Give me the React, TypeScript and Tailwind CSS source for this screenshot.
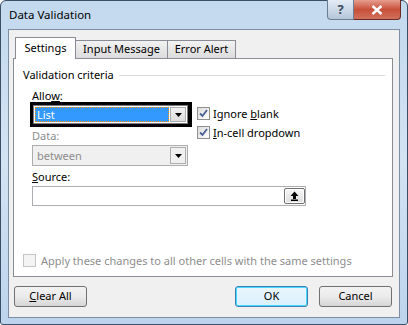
import React from "react";

const font = { fontFamily: '"Noto Sans", "Open Sans", sans-serif' };

function Check({ checked, disabled }: { checked?: boolean; disabled?: boolean }) {
  return (
    <div
      className={`w-[13px] h-[13px] border flex items-center justify-center shrink-0 ${
        disabled ? "border-[#c5c5c5] bg-[#f4f4f4]" : "border-[#8f8f8f] bg-gradient-to-br from-[#dcdcdc] to-[#ffffff]"
      }`}
    >
      {checked && (
        <svg width="9" height="9" viewBox="0 0 9 9">
          <path d="M1 4.5 L3.5 7 L8 1" fill="none" stroke="#4a5f97" strokeWidth="1.8" />
        </svg>
      )}
    </div>
  );
}

function DropBtn({ disabled }: { disabled?: boolean }) {
  return (
    <div
      className={`w-[16px] h-full border flex items-center justify-center ${
        disabled ? "border-[#adadad] bg-[#f0f0f0]" : "border-[#acacac] bg-gradient-to-b from-[#f2f2f2] to-[#dcdcdc]"
      }`}
    >
      <svg width="7" height="4" viewBox="0 0 7 4">
        <path d="M0 0 H7 L3.5 4 Z" fill="#000" />
      </svg>
    </div>
  );
}

function Btn({ children, def }: { children: React.ReactNode; def?: boolean }) {
  return (
    <div
      className={`w-[73px] h-[21px] rounded-[3px] border flex items-center justify-center text-[11px] text-black ${
        def
          ? "border-[#3c7fb1] bg-gradient-to-b from-[#eaf6fd] to-[#d9f0fc] shadow-[inset_0_0_0_1px_#48d9ff]"
          : "border-[#707070] bg-gradient-to-b from-[#f2f2f2] via-[#ebebeb] to-[#d6d6d6]"
      }`}
    >
      {children}
    </div>
  );
}

export default function App() {
  return (
    <div className="w-[408px] h-[325px] bg-white" style={font}>
      <div className="w-[408px] h-[325px] rounded-t-[6px] rounded-b-[3px] border border-[#3a4e66] bg-gradient-to-b from-[#c3d9ee] via-[#d3e3f4] to-[#bcd4ec] flex flex-col relative">
        {/* title bar */}
        <div className="h-[28px] flex items-center pl-[8px] text-[11.5px] text-black shrink-0">
          Data Validation
        </div>
        <div className="absolute top-[-1px] right-[6px] flex">
          <div className="w-[27px] h-[20px] rounded-bl-[4px] border border-[#6b7d94] border-t-0 bg-gradient-to-b from-[#e4ecf5] to-[#b5c6da] flex items-center justify-center text-[13px] font-bold text-[#3a4a60]">
            ?
          </div>
          <div className="w-[47px] h-[20px] rounded-br-[4px] border border-[#6a2a24] border-t-0 border-l-0 bg-gradient-to-b from-[#e59c8e] via-[#c8503b] to-[#d0705c] flex items-center justify-center">
            <svg width="12" height="10" viewBox="0 0 12 10">
              <path d="M1.5 1 L10.5 9 M10.5 1 L1.5 9" stroke="#fff" strokeWidth="2.4" />
            </svg>
          </div>
        </div>
        {/* content */}
        <div className="mx-[7px] h-[289px] border border-[#7d8ea3] bg-[#f0f0f0] flex flex-col relative">
          {/* tabs */}
          <div className="h-[28px] flex items-end pl-[6px] pt-[7px]">
            <div className="w-[61px] h-[22px] border border-[#898c95] border-b-0 bg-white flex items-center justify-center text-[11px] relative z-10 mb-[-1px]">
              Settings
            </div>
            <div className="w-[92px] h-[18px] border border-[#898c95] border-l-0 border-b-0 bg-gradient-to-b from-[#f2f2f2] to-[#dcdcdc] flex items-center justify-center text-[11px]">
              Input Message
            </div>
            <div className="w-[68px] h-[18px] border border-[#898c95] border-l-0 border-b-0 bg-gradient-to-b from-[#f2f2f2] to-[#dcdcdc] flex items-center justify-center text-[11px]">
              Error Alert
            </div>
          </div>
          {/* panel */}
          <div className="ml-[4px] w-[380px] h-[219px] border border-[#898c95] bg-white relative">
            <div className="flex items-center h-[14px] mt-[9px] ml-[9px] mr-[7px]">
              <span className="text-[11px] leading-[14px] text-black pr-[5px]">Validation criteria</span>
              <div className="flex-1 h-px bg-[#dcdcdc]" />
            </div>
            <div className="ml-[18px] mt-[7px] text-[11px] leading-[13px] text-black">
              Allo<u>w</u>:
            </div>
            <div className="flex items-start h-[25px] ml-[16px]">
              <div className="w-[162px] h-[25px] bg-black pl-[3px] pt-[3px] pr-[4px] pb-[3px]">
                <div className="w-full h-full bg-white border border-[#7a7a7a] flex items-stretch p-[1px]">
                  <div className="flex-1 bg-[#3399ff] text-white text-[11px] leading-[15px] pl-[2px] mr-[1px] outline-1 outline-dotted outline-[#ff8c00] outline-offset-[-1px]">
                    List
                  </div>
                  <DropBtn />
                </div>
              </div>
              <div className="flex flex-col ml-[5px] mt-[5px] gap-[6px]">
                <div className="flex items-center gap-[3px] text-[11px] leading-[13px]">
                  <Check checked />
                  <span>Ignore <u>b</u>lank</span>
                </div>
                <div className="flex items-center gap-[3px] text-[11px] leading-[13px]">
                  <Check checked />
                  <span><u>I</u>n-cell dropdown</span>
                </div>
              </div>
            </div>
            <div className="ml-[18px] mt-[2px] text-[11px] leading-[13px] text-[#8d8d8d]">Data:</div>
            <div className="ml-[18px] mt-[3px] w-[156px] h-[21px] border border-[#adadad] bg-[#f0f0f0] flex items-stretch">
              <div className="flex-1 text-[11px] leading-[19px] pl-[4px] text-[#8d8d8d]">between</div>
              <div className="p-px"><DropBtn disabled /></div>
            </div>
            <div className="ml-[18px] mt-[4px] text-[11px] leading-[13px] text-black">
              <u>S</u>ource:
            </div>
            <div className="ml-[18px] mt-[3px] w-[274px] h-[20px] border border-[#abadb3] bg-white flex justify-end items-center">
              <div className="w-[21px] h-[16px] border border-[#707070] rounded-[2px] bg-gradient-to-b from-[#f6f6f6] to-[#dedede] flex items-center justify-center shadow-[inset_0_0_0_1px_#ffffff]">
                <svg width="9" height="10" viewBox="0 0 9 10">
                  <path d="M4.5 0.5 L8.5 5 H6 V8 H3 V5 H0.5 Z" fill="#000" />
                  <rect x="1" y="8.5" width="7" height="1.5" fill="#000" />
                </svg>
              </div>
            </div>
            <div className="absolute left-[9px] bottom-[9px] flex items-center gap-[5px] text-[11px] leading-[13px] text-[#8d8d8d]">
              <Check disabled />
              <span>Apply these changes to all other cells with the same settings</span>
            </div>
          </div>
          {/* buttons */}
          <div className="flex mt-[9px] ml-[5px] mr-[7px]">
            <Btn>
              <span><u>C</u>lear All</span>
            </Btn>
            <div className="flex-1" />
            <Btn def>OK</Btn>
            <div className="w-[11px]" />
            <Btn>Cancel</Btn>
          </div>
        </div>
      </div>
    </div>
  );
}
